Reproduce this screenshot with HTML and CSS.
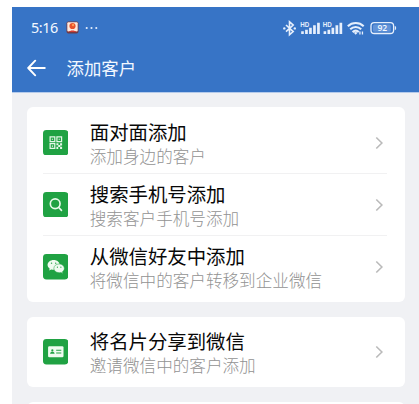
FILE: index.html
```html
<!DOCTYPE html>
<html lang="zh-CN">
<head>
<meta charset="utf-8">
<title>添加客户</title>
<link rel="stylesheet" href="styles.css">
</head>
<body>
<div class="screen">
  <header class="header">
    <div class="status">
      <span class="time">5:16</span>
      <svg class="app" width="13" height="13" viewBox="0 0 13 13"><rect x=".5" y=".5" width="12" height="12" rx="2" fill="#713b46"/><rect x="1.3" y="1.2" width="10.4" height="9.2" rx="1" fill="#ffe9dc"/><circle cx="6.5" cy="5" r="3.1" fill="#e9522b"/><circle cx="7" cy="4" r="1.2" fill="#ff9b50"/><path d="M2.5 11c1.5-2 6.5-2 8 0z" fill="#d33b32"/></svg>
      <svg class="dots" width="14" height="4" viewBox="0 0 14 4" fill="#e6effc"><circle cx="1.7" cy="2" r="1.05"/><circle cx="6.5" cy="2" r="1.05"/><circle cx="11.3" cy="2" r="1.05"/></svg>
      <svg class="signals" width="116" height="18" viewBox="281 18 116 18">
        <g fill="none" stroke="#e6effc" stroke-width="1.6"><path d="M286 24l7.2 6.6-3.7 3.2v-13l3.7 3.2-7.2 6.6"/></g>
        <g fill="#e6effc"><circle cx="284.3" cy="27.4" r="1.2"/><circle cx="294.8" cy="27.4" r="1.2"/></g>
        <g class="hd"><text x="300.3" y="25.5" textLength="9" lengthAdjust="spacingAndGlyphs">HD</text><text x="322.7" y="25.5" textLength="9" lengthAdjust="spacingAndGlyphs">HD</text></g>
        <g fill="#e6effc"><path id="bars" d="M301.2 30.3h2.6v2.7h-2.6zM305.1 28.8h2.7v4.2h-2.7zM309.1 26.7h2.7v6.3h-2.7zM313.1 24.3h2.7v8.7h-2.7zM317.1 21.8h2.7v11.2h-2.7z"/><use href="#bars" x="22.4"/></g>
        <g fill="none" stroke="#e6effc" stroke-width="2.1"><path d="M347.8 25.2c4.5-4.2 11.4-4.2 15.9 0M350.2 28.3c3.2-3 7.8-3 11 0M352.6 31.1c2-1.8 4.3-1.8 6.2 0"/></g>
        <g fill="#e6effc"><path d="M353.8 31.7q1.9-1.4 3.8 0l-1.9 2zM359.3 30.6h1.3v3h-1.3zM361.8 30.6h1.3v3h-1.3z"/></g>
        <rect x="371" y="21.7" width="22.6" height="10.8" rx="3.3" fill="none" stroke="#e6effc" stroke-width="1.3"/>
        <rect x="373" y="23.5" width="17.8" height="7.2" rx="1.5" fill="#6293d8"/>
        <path d="M394.8 25q1.4 0 1.4 2.1t-1.4 2.1z" fill="#e6effc"/>
        <text class="level" x="382.3" y="30.2" text-anchor="middle">92</text>
      </svg>
    </div>
    <div class="nav">
      <svg width="19" height="18" viewBox="0 0 19 18" fill="none" stroke="#fff" stroke-width="1.9" stroke-linecap="round" stroke-linejoin="round"><path d="M8.2 1.7L1.2 9l7 7.3M1.4 9h16.4"/></svg>
      <h1>添加客户</h1>
    </div>
  </header>
  <main class="list">
    <section class="card">
      <div class="row first">
        <svg class="icon" viewBox="0 0 25 25"><rect width="25" height="25" rx="3.4" fill="#20a243"/><g fill="none" stroke="#e4f7e7" stroke-width="1.2"><path d="M7 6.8h4.6v4.6H7zM13.7 6.8h4.6v4.6h-4.6zM7 13.5h4.6v4.6H7z"/></g><path fill="#e4f7e7" d="M8.7 8.5h1.2v1.2H8.7zM15.4 8.5h1.2v1.2h-1.2zM8.7 15.2h1.2v1.2H8.7zM13.2 13h2v2h-2zM16.8 13h2v2.2h-2zM15 14.8h2v2h-2zM13.2 16.6h1.8v2h-1.8zM16.8 16.6h2v2h-2z"/></svg>
        <div class="text"><div class="title">面对面添加</div><div class="sub">添加身边的客户</div></div>
        <svg class="chevron" viewBox="0 0 8 14"><path d="M1.3 1.5L6.9 7l-5.6 5.5"/></svg>
      </div>
      <div class="row middle">
        <svg class="icon" viewBox="0 0 25 25"><rect width="25" height="25" rx="3.4" fill="#20a243"/><g fill="none" stroke="#e9faeb" stroke-width="1.6" stroke-linecap="round"><circle cx="12" cy="11.6" r="4.8"/><path d="M15.5 15.2l2.7 2.9"/></g></svg>
        <div class="text"><div class="title">搜索手机号添加</div><div class="sub">搜索客户手机号添加</div></div>
        <svg class="chevron" viewBox="0 0 8 14"><path d="M1.3 1.5L6.9 7l-5.6 5.5"/></svg>
      </div>
      <div class="row last">
        <svg class="icon" viewBox="0 0 25 25"><rect width="25" height="25" rx="3.4" fill="#20a243"/><g fill="#f0fbf1"><path d="M10.5 5.8c-3.4 0-6 2.2-6 4.9 0 1.6.8 2.9 2.1 3.8L6 16.3l2.2-1.1q3.8 1 6.2-1.1 2.1-1.6 2.1-3.4c0-2.7-2.6-4.9-6-4.9z"/><path d="M15.9 9.8c-3 0-5.2 1.9-5.2 4.3s2.2 4.3 5.2 4.3q.9 0 1.8-.3l1.9 1-.5-1.6c1.2-.8 1.9-2 1.9-3.4 0-2.4-2.3-4.3-5.1-4.3z" stroke="#20a243" stroke-width=".5"/></g><g fill="#20a243"><circle cx="8.4" cy="9" r=".7"/><circle cx="12.5" cy="9" r=".7"/><circle cx="14.2" cy="13" r=".6"/><circle cx="17.6" cy="13" r=".6"/></g></svg>
        <div class="text"><div class="title">从微信好友中添加</div><div class="sub">将微信中的客户转移到企业微信</div></div>
        <svg class="chevron" viewBox="0 0 8 14"><path d="M1.3 1.5L6.9 7l-5.6 5.5"/></svg>
      </div>
    </section>
    <section class="card">
      <div class="row single">
        <svg class="icon" viewBox="0 0 25 25"><rect width="25" height="25" rx="3.4" fill="#20a243"/><rect x="5" y="7.2" width="15.2" height="10.8" rx="1.2" fill="#effbf0"/><g fill="#20a243"><circle cx="9.2" cy="11.2" r="1.1"/><path d="M7 14.5c0-2.6 4.4-2.6 4.4 0zM13 10.6h5v.9h-5zM13 13.3h5v.9h-5z"/></g></svg>
        <div class="text"><div class="title">将名片分享到微信</div><div class="sub">邀请微信中的客户添加</div></div>
        <svg class="chevron" viewBox="0 0 8 14"><path d="M1.3 1.5L6.9 7l-5.6 5.5"/></svg>
      </div>
    </section>
    <section class="card next"></section>
  </main>
</div>
</body>
</html>
```
FILE: styles.css
```css
* { box-sizing: border-box; }
body { margin: 0; background: #fff; font-family: "Noto Sans CJK SC", sans-serif; overflow: hidden; }
.screen { margin: 7px 0 0 12px; height: 397px; background: #f0f1f4; overflow: hidden; }
.header { height: 86px; background: #3774c6; border-bottom: 1px solid #b5cbeb; color: #f3f8ff; }
.status { height: 41px; padding: 0 22px 0 19px; display: flex; align-items: center; }
.time { width: 27px; font: 400 14.4px/20px "Noto Sans", sans-serif; letter-spacing: -.4px; white-space: nowrap; }
.app { margin-left: 8px; }
.dots { margin-left: 6px; }
.signals { margin-left: auto; }
.hd text { font: 700 6.5px "Liberation Sans", sans-serif; fill: #e6effc; }
.level { font: 600 8.5px "Open Sans", sans-serif; fill: #f4f9ff; }
.nav { height: 40px; padding-left: 15px; display: flex; align-items: center; }
.nav h1 { margin: 0 0 0 20.5px; font-size: 17.4px; line-height: 26px; font-weight: 400; }
.list { padding: 14px 14px 0 15px; display: flex; flex-direction: column; gap: 15px; }
.card { background: #fff; border-radius: 6px; padding: 0 18px 0 16px; }
.row { height: 66px; display: flex; align-items: center; }
.row.first { padding-top: 5px; }
.row.middle { height: 63px; border: solid #f1f1f2; border-width: 1px 0; }
.row.last { padding-bottom: 4px; }
.row.single { height: 70px; }
.icon { width: 25.4px; height: 25.4px; flex: none; }
.text { margin-left: 21.4px; flex: 1; white-space: nowrap; padding-top: 1px; }
.title { font-size: 19.4px; line-height: 25px; color: #080808; }
.sub { font-size: 16.6px; line-height: 24px; color: #929292; font-weight: 300; }
.chevron { width: 8px; height: 14px; margin-right: 4px; fill: none; stroke: #bababa; stroke-width: 1.6; }
.card.next { height: 20px; flex: none; }
```
